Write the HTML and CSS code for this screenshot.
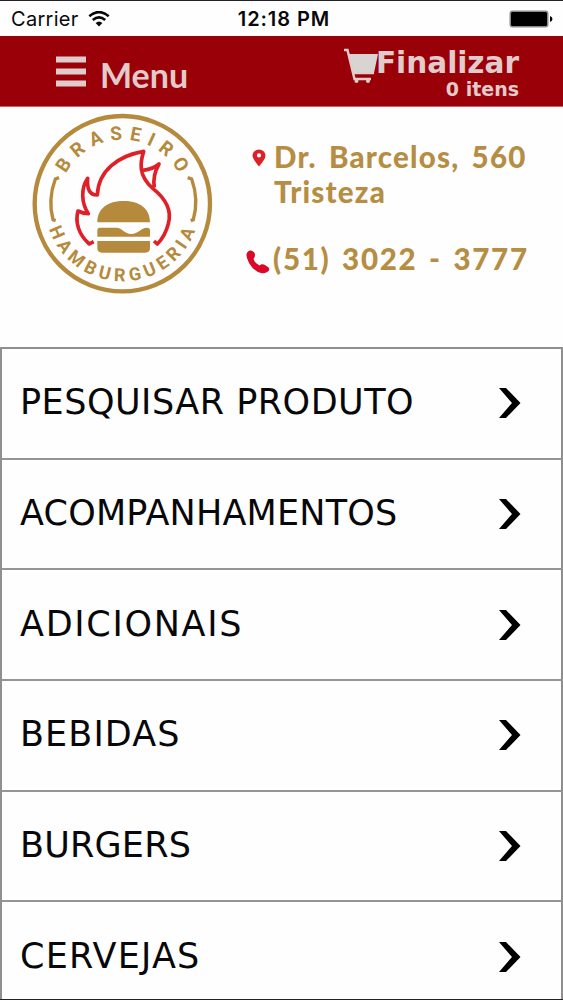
FILE: index.html
```html
<!DOCTYPE html>
<html lang="pt-BR">

<head>
    <meta charset="UTF-8">
    <meta name="viewport" content="width=device-width, initial-scale=1">
    <title>Braseiro Hamburgueria</title>
    <link rel="stylesheet" href="styles.css">
</head>

<body>
    <div class="app">
        <div class="statusBar">
            <div class="carrier">
                <span>Carrier</span>
                <svg class="wifi" viewBox="0 0 22 16">
                    <path d="M1.3 5.2Q11-3 20.7 5.2" />
                    <path d="M4.8 9Q11 3.8 17.2 9" />
                    <path class="wifiDot" d="M7.6 12Q11 9 14.4 12L11 15.6Z" />
                </svg>
            </div>
            <span class="time">12:18 PM</span>
            <div class="batteryBox">
                <svg class="battery" viewBox="0 0 44 18">
                    <rect x="0.5" y="0.5" width="39" height="17" rx="3" fill="#8a8a8a" />
                    <rect x="2" y="2" width="36" height="14" rx="1.5" />
                    <path d="M41 6Q43.5 7 43.5 9T41 12Z" />
                </svg>
            </div>
        </div>

        <div class="header">
            <a class="menuButton" href="#">
                <svg class="bars" viewBox="0 0 30 31">
                    <path d="M0 3.5H30M0 15.5H30M0 27.5H30" />
                </svg>
                <span>Menu</span>
            </a>
            <a class="cart" href="#">
                <svg class="cartIcon" viewBox="0 0 36 36">
                    <path class="cartBasket" d="M5 6H35L31 25H10Z" />
                    <path class="cartFrame" d="M1 2H4.5L11.5 31H28M10 25H31" />
                    <circle cx="13.5" cy="33" r="2" />
                    <circle cx="25" cy="33" r="2" />
                </svg>
                <div class="cartText">
                    <span class="cartTitle">Finalizar</span>
                    <span class="cartCount">0 itens</span>
                </div>
            </a>
        </div>

        <div class="banner">
            <svg class="logo" viewBox="0 0 585 585">
                <defs>
                    <path id="arcTop" d="M122.5 199.9A192 192 0 0 1 461.5 199.9" />
                    <path id="arcBottom" d="M71.7 365.9A233 233 0 0 0 512.3 365.9" />
                </defs>
                <circle class="ring" cx="292" cy="290" r="263" />
                <text class="logoTop" textLength="415"><textPath href="#arcTop" textLength="415">BRASEIRO</textPath></text>
                <text class="logoBottom" textLength="572"><textPath href="#arcBottom" textLength="572">HAMBURGUERIA</textPath></text>
                <path class="bracket" d="M102 212L91 216Q68 278 84 338L92 341M488 212L500 216Q522 278 505 338L497 341" />
                <path class="flame" d="M206 404L193 411C160 382 150 345 159 312Q175 320 190 320C170 290 166 246 188 214Q184 265 217 264C220 190 280 146 356 133C346 165 338 205 384 245C428 280 440 315 430 350Q421 387 397 411L387 402M352 190Q382 188 402 171Q382 206 388 242" />
                <path class="burger" d="M217 346C217 303 250 282 296 282S375 303 375 346ZM224 362H274C292 362 298 381 319 381S347 362 366 362Q375 362 375 370V389H217V370Q217 362 224 362ZM217 402H375V423Q375 437 361 437H231Q217 437 217 423Z" />
            </svg>
            <div class="contact">
                <div class="address">
                    <svg class="pin" viewBox="0 0 14 18">
                        <path fill-rule="evenodd" d="M7 17.5Q.5 10 .5 6.5A6.5 6 0 0 1 13.5 6.5Q13.5 10 7 17.5ZM7 4.3A2.1 2.1 0 1 0 7 8.5A2.1 2.1 0 1 0 7 4.3Z" />
                    </svg>
                    <div class="addressText">
                        <p class="street">Dr. Barcelos, 560</p>
                        <p class="district">Tristeza</p>
                    </div>
                </div>
                <div class="phone">
                    <svg class="phoneIcon" viewBox="0 0 24 24">
                        <path d="M.5 4Q2 0 5 .5Q9 1.5 9 5Q9 7.5 7.5 9Q9 13.5 13.5 15.5Q15.5 13.5 18 14.5L22 17Q24.500 19 22 21.500Q19 24 15 23Q8 21.500 3 13Q0 7 .5 4Z" />
                    </svg>
                    <p class="number">(51) 3022 - 3777</p>
                </div>
            </div>
        </div>

        <div class="categories">
            <a class="category search" href="#">
                <span>PESQUISAR PRODUTO</span>
                <svg class="chevron" viewBox="0 0 22 32"><path d="M0 1H7L21.500 16L7 31H0L13 16Z" /></svg>
            </a>
            <a class="category sides" href="#">
                <span>ACOMPANHAMENTOS</span>
                <svg class="chevron" viewBox="0 0 22 32"><path d="M0 1H7L21.500 16L7 31H0L13 16Z" /></svg>
            </a>
            <a class="category extras" href="#">
                <span>ADICIONAIS</span>
                <svg class="chevron" viewBox="0 0 22 32"><path d="M0 1H7L21.500 16L7 31H0L13 16Z" /></svg>
            </a>
            <a class="category drinks" href="#">
                <span>BEBIDAS</span>
                <svg class="chevron" viewBox="0 0 22 32"><path d="M0 1H7L21.500 16L7 31H0L13 16Z" /></svg>
            </a>
            <a class="category burgers" href="#">
                <span>BURGERS</span>
                <svg class="chevron" viewBox="0 0 22 32"><path d="M0 1H7L21.500 16L7 31H0L13 16Z" /></svg>
            </a>
            <a class="category beers" href="#">
                <span>CERVEJAS</span>
                <svg class="chevron" viewBox="0 0 22 32"><path d="M0 1H7L21.500 16L7 31H0L13 16Z" /></svg>
            </a>
        </div>
    </div>
</body>

</html>
```

FILE: styles.css
```css
* {
    margin: 0;
    padding: 0;
    box-sizing: border-box;
}

body {
    font-family: "DejaVu Sans", Verdana, sans-serif;
    background-color: #fefefe;
    color: #08080a;
}

a {
    color: inherit;
    text-decoration: none;
}

svg {
    display: block;
    flex-shrink: 0;
}

.app {
    height: 1000px;
    overflow: hidden;
    border-top: 1px solid #242226;
    border-bottom: 1px solid #242226;
}

/* Status bar */
.statusBar {
    display: grid;
    grid-template-columns: 1fr auto 1fr;
    align-items: center;
    height: 35px;
    padding: 1px 10px 0 11px;
    font-family: Inter, sans-serif;
    font-size: 20px;
}

.carrier {
    display: flex;
    align-items: center;
    gap: 9px;
    letter-spacing: 0.3px;
}

.wifi {
    width: 22px;
    height: 16px;
    fill: none;
    stroke: #08080a;
    stroke-width: 2.6;
}

.wifi .wifiDot {
    fill: #08080a;
    stroke: none;
}

.time {
    padding-left: 4px;
    font-weight: 600;
    letter-spacing: 0.95px;
}

.batteryBox {
    display: flex;
    justify-content: flex-end;
}

.battery {
    width: 44px;
    height: 18px;
}

/* Red header */
.header {
    display: flex;
    justify-content: space-between;
    height: 71px;
    padding: 0 44px 0 56px;
    background-color: #9a0008;
    border-bottom: 1px solid #c8606a;
    color: #e2cbcb;
}

.menuButton {
    display: flex;
    align-items: flex-start;
    gap: 14px;
    padding-top: 20px;
    font-family: Lato, sans-serif;
    font-size: 34px;
    font-weight: 700;
    line-height: 38px;
}

.bars {
    width: 30px;
    height: 31px;
    stroke: #e2cbcb;
    stroke-width: 6;
}

.cart {
    display: flex;
    padding-top: 12px;
}

.cartIcon {
    width: 36px;
    height: 36px;
    margin-right: -3px;
    fill: #e2cbcb;
}

.cartBasket {
    fill: #d8d4d2;
}

.cartFrame {
    fill: none;
    stroke: #e2cbcb;
    stroke-width: 2.5;
}

.cartText {
    display: flex;
    flex-direction: column;
    align-items: flex-end;
    font-weight: 700;
}

.cartTitle {
    font-size: 29.5px;
    line-height: 30px;
}

.cartCount {
    font-size: 19px;
    line-height: 22px;
}

/* Logo and contact */
.banner {
    display: flex;
    height: 240px;
    padding-left: 25px;
}

.logo {
    width: 195px;
    height: 195px;
}

.ring {
    fill: none;
    stroke: #b58a3c;
    stroke-width: 13;
}

.bracket {
    fill: none;
    stroke: #b58a3c;
    stroke-width: 10;
}

.logoTop,
.logoBottom {
    font-family: Roboto, sans-serif;
    font-weight: 700;
    font-size: 57px;
    fill: #b58a3c;
}

.logoBottom {
    font-size: 54px;
}

.flame {
    fill: none;
    stroke: #df2027;
    stroke-width: 11;
    stroke-linejoin: round;
}

.burger {
    fill: #b58a3c;
}

.contact {
    padding: 32px 0 0 26px;
    font-family: Lato, sans-serif;
    font-size: 29.5px;
    font-weight: 900;
    line-height: 35px;
    color: #b58d43;
    white-space: nowrap;
}

.address {
    display: flex;
    align-items: flex-start;
    gap: 8px;
    padding-left: 6px;
}

.pin {
    width: 14px;
    height: 18px;
    margin-top: 10px;
    fill: #df2027;
}

.phone {
    display: flex;
    align-items: flex-start;
    gap: 3px;
    margin-top: 32px;
}

.phoneIcon {
    width: 24px;
    height: 24px;
    margin-top: 9px;
    fill: #dc0828;
}

.street,
.district {
    letter-spacing: 1.2px;
    word-spacing: 4px;
}

.number {
    letter-spacing: 1.7px;
    word-spacing: 3px;
}

/* Category list */
.categories {
    border: 2px solid #8f8f8f;
    border-bottom: none;
}

.category {
    display: flex;
    align-items: center;
    justify-content: space-between;
    height: 110.7px;
    padding: 0 40px 2px 18px;
    border-bottom: 2px solid #959595;
    font-size: 35px;
}

.search {
    letter-spacing: 0.5px;
}

.sides,
.burgers {
    letter-spacing: 0.2px;
}

.extras {
    letter-spacing: 1.7px;
}

.drinks {
    letter-spacing: 1.1px;
}

.beers {
    letter-spacing: 1.2px;
}

.chevron {
    width: 22px;
    height: 32px;
    margin-top: 2px;
}
```
